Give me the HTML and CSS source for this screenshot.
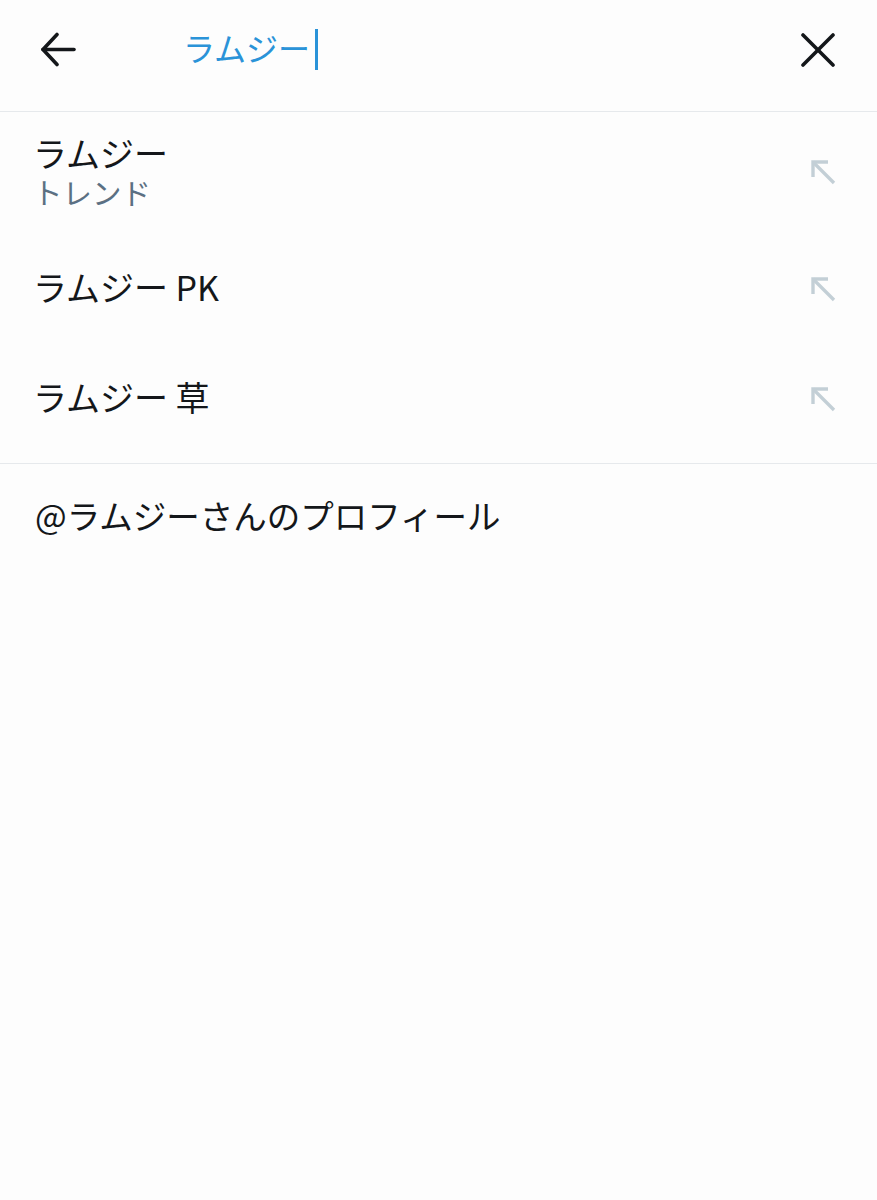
FILE: index.html
```html
<!DOCTYPE html>
<html lang="ja">

<head>
  <meta charset="UTF-8">
  <meta name="viewport" content="width=device-width, initial-scale=1.0">
  <title>検索</title>
  <link rel="stylesheet" href="styles.css">
</head>

<body>
  <header class="search-bar">
    <button class="icon-btn back" aria-label="戻る">
      <svg width="36" height="36" viewBox="0 0 36 36" fill="none" stroke="currentColor" stroke-width="3.6"
        stroke-linecap="round" stroke-linejoin="round">
        <path d="M3 17.5 H34" />
        <path d="M17 2.5 L3 17.5 L17 32.5" />
      </svg>
    </button>
    <div class="query">
      <span class="query-text">ラムジー</span><span class="caret"></span>
    </div>
    <button class="icon-btn close" aria-label="クリア">
      <svg width="34" height="34" viewBox="0 0 34 34" fill="none" stroke="currentColor" stroke-width="3.6"
        stroke-linecap="round">
        <path d="M2 2 L32 32" />
        <path d="M32 2 L2 32" />
      </svg>
    </button>
  </header>

  <ul class="suggestions">
    <li class="suggestion trend">
      <div class="label">
        <span class="title">ラムジー</span>
        <span class="sub">トレンド</span>
      </div>
      <svg class="fill-arrow" width="26" height="26" viewBox="0 0 26 26" fill="none" stroke="currentColor"
        stroke-width="3.4">
        <path d="M2 17 V2 H17" />
        <path d="M2 2 L23 23" />
      </svg>
    </li>
    <li class="suggestion">
      <div class="label">
        <span class="title">ラムジー PK</span>
      </div>
      <svg class="fill-arrow" width="26" height="26" viewBox="0 0 26 26" fill="none" stroke="currentColor"
        stroke-width="3.4">
        <path d="M2 17 V2 H17" />
        <path d="M2 2 L23 23" />
      </svg>
    </li>
    <li class="suggestion">
      <div class="label">
        <span class="title">ラムジー 草</span>
      </div>
      <svg class="fill-arrow" width="26" height="26" viewBox="0 0 26 26" fill="none" stroke="currentColor"
        stroke-width="3.4">
        <path d="M2 17 V2 H17" />
        <path d="M2 2 L23 23" />
      </svg>
    </li>
  </ul>

  <div class="profile-link">@ラムジーさんのプロフィール</div>
</body>

</html>
```

FILE: styles.css
```css
*,
*::before,
*::after {
  box-sizing: border-box;
}

:root {
  --text: #14171a;
  --muted: #5b7083;
  --blue: #2a93d8;
  --line: #e6e9ec;
  --arrow: #c3cfd6;
  --bg: #fdfdfd;
}

html,
body {
  margin: 0;
  padding: 0;
  background: var(--bg);
  color: var(--text);
  font-family: "Noto Sans CJK JP", "Noto Sans", sans-serif;
}

.search-bar {
  display: flex;
  align-items: center;
  height: 112px;
  padding: 0 42px 12px 40px;
  border-bottom: 1px solid var(--line);
}

.icon-btn {
  display: flex;
  align-items: center;
  justify-content: center;
  padding: 0;
  border: none;
  background: none;
  color: var(--text);
}

.close {
  margin-left: auto;
}

.query {
  display: flex;
  align-items: center;
  margin-left: 107px;
  color: var(--blue);
  font-size: 32px;
  line-height: 40px;
}

.query-text {
  padding-bottom: 6px;
}

.caret {
  display: inline-block;
  width: 3px;
  height: 41px;
  margin-left: 5px;
  background: var(--blue);
}

.suggestions {
  list-style: none;
  margin: 0;
  padding: 0 0 8px;
  border-bottom: 1px solid var(--line);
}

.suggestion {
  display: flex;
  align-items: center;
  min-height: 110px;
  padding: 20px 40px 26px 33px;
}

.suggestion.trend {
  padding-top: 24px;
  padding-bottom: 27px;
}

.suggestion .fill-arrow {
  margin-top: 6px;
}

.suggestion.trend .fill-arrow {
  margin-top: 2px;
}

.label {
  display: flex;
  flex-direction: column;
  gap: 4px;
}

.title {
  font-size: 34px;
  line-height: 34px;
}

.sub {
  font-size: 29.5px;
  line-height: 34px;
  color: var(--muted);
}

.fill-arrow {
  margin-left: auto;
  color: var(--arrow);
}

.profile-link {
  padding: 31px 35px 37px;
  font-size: 33.5px;
  line-height: 40px;
}
```
